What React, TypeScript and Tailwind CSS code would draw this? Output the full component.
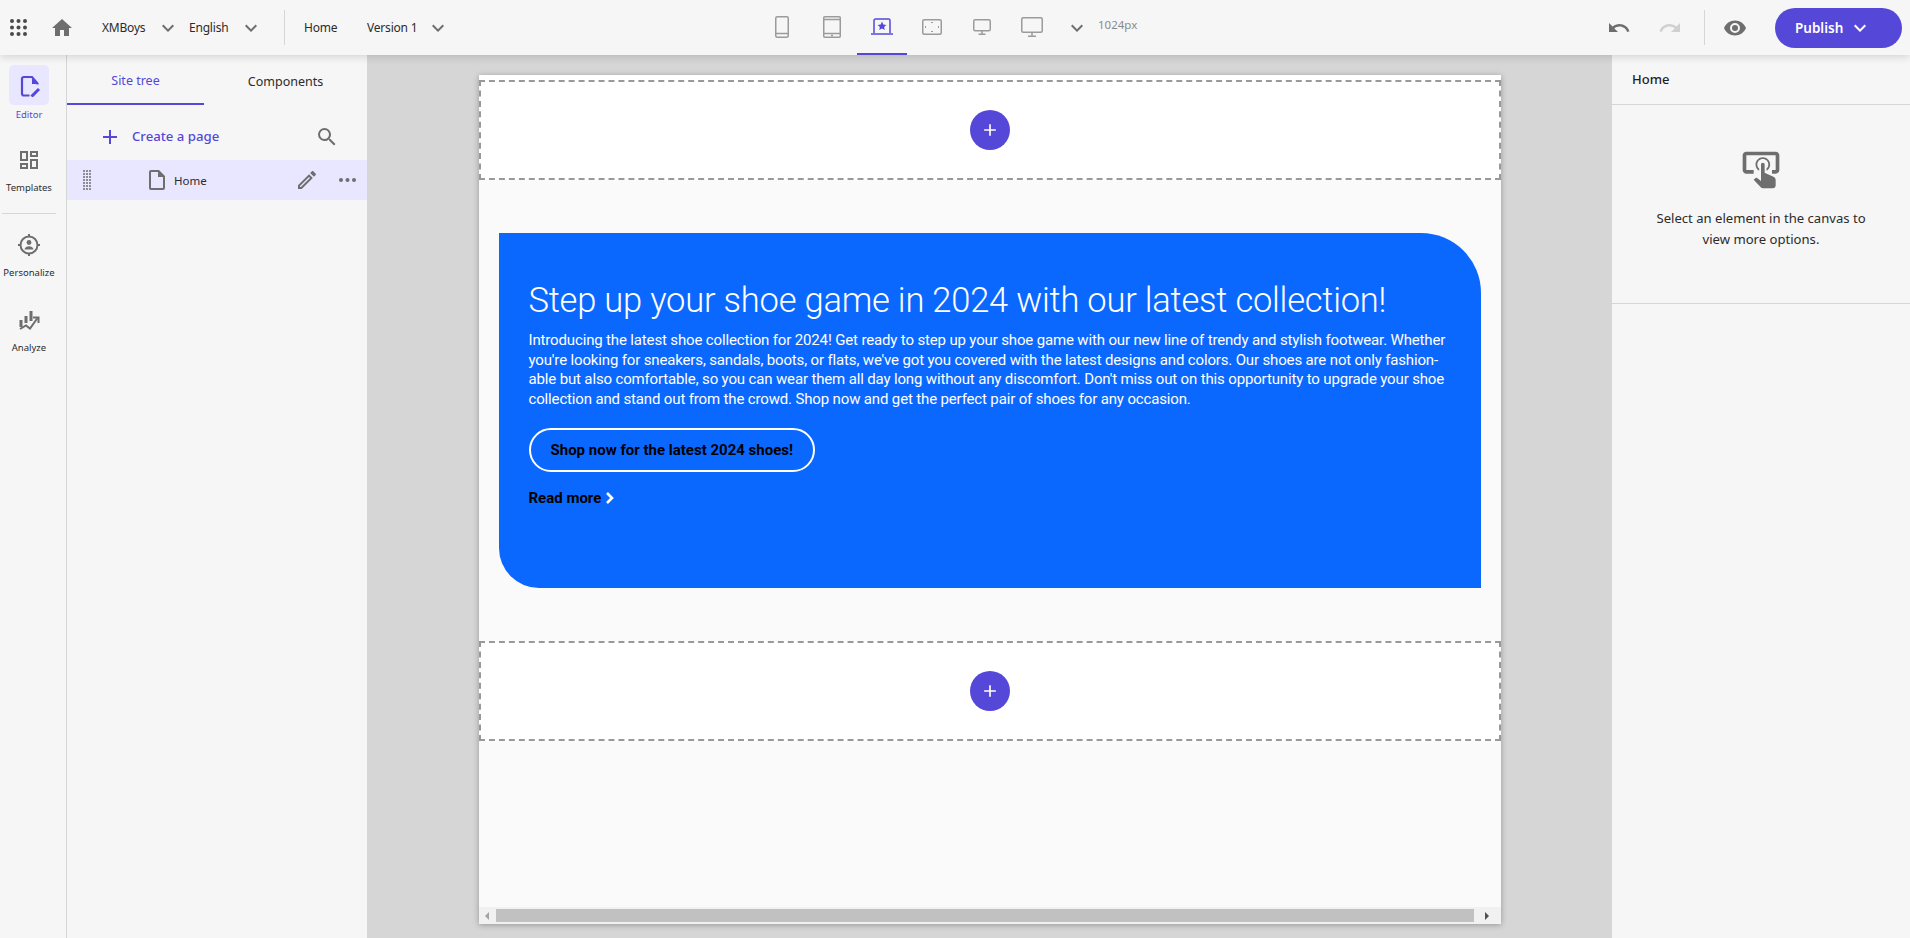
import type { ReactNode } from "react";

const uiFont = "font-['Noto_Sans',sans-serif]";

function Mdi({ d, size = 24, className = "" }: { d: string; size?: number; className?: string }) {
  return (
    <svg width={size} height={size} viewBox="0 0 24 24" className={`shrink-0 fill-current ${className}`}>
      <path d={d} />
    </svg>
  );
}

const paths = {
  home: "M10,20V14H14V20H19V12H22L12,3L2,12H5V20H10Z",
  chevron: "M7.41,8.58L12,13.17L16.59,8.58L18,10L12,16L6,10L7.41,8.58Z",
  file: "M14,2H6A2,2 0 0,0 4,4V20A2,2 0 0,0 6,22H18A2,2 0 0,0 20,20V8L14,2M18,20H6V4H13V9H18V20Z",
  pencil:
    "M14.06,9L15,9.94L5.92,19H5V18.08L14.06,9M17.66,3C17.41,3 17.15,3.1 16.96,3.29L15.13,5.12L18.88,8.87L20.71,7.04C21.1,6.65 21.1,6 20.71,5.63L18.37,3.29C18.17,3.09 17.92,3 17.66,3M14.06,6.19L3,17.25V21H6.75L17.81,9.94L14.06,6.19Z",
  search:
    "M9.5,3A6.5,6.5 0 0,1 16,9.5C16,11.11 15.41,12.59 14.44,13.73L14.71,14H15.5L20.5,19L19,20.5L14,15.5V14.71L13.73,14.44C12.59,15.41 11.11,16 9.5,16A6.5,6.5 0 0,1 3,9.5A6.5,6.5 0 0,1 9.5,3M9.5,5C7,5 5,7 5,9.5C5,12 7,14 9.5,14C12,14 14,12 14,9.5C14,7 12,5 9.5,5Z",
  plus: "M19,13H13V19H11V13H5V11H11V5H13V11H19V13Z",
  undo: "M12.5,8C9.85,8 7.45,9 5.6,10.6L2,7V16H11L7.38,12.38C8.77,11.22 10.54,10.5 12.5,10.5C16.04,10.5 19.05,12.81 20.1,16L22.47,15.22C21.08,11.03 17.15,8 12.5,8Z",
  redo: "M18.4,10.6C16.55,9 14.15,8 11.5,8C6.85,8 2.92,11.03 1.54,15.22L3.9,16C4.95,12.81 7.95,10.5 11.5,10.5C13.45,10.5 15.23,11.22 16.62,12.38L13,16H22V7L18.4,10.6Z",
  eye: "M12,9A3,3 0 0,0 9,12A3,3 0 0,0 12,15A3,3 0 0,0 15,12A3,3 0 0,0 12,9M12,17A5,5 0 0,1 7,12A5,5 0 0,1 12,7A5,5 0 0,1 17,12A5,5 0 0,1 12,17M12,4.5C7,4.5 2.73,7.61 1,12C2.73,16.39 7,19.5 12,19.5C17,19.5 21.27,16.39 23,12C21.27,7.61 17,4.5 12,4.5Z",
  templates: "M19,5V7H15V5H19M9,5V11H5V5H9M19,13V19H15V13H19M9,17V19H5V17H9M21,3H13V9H21V3M11,3H3V13H11V3M21,11H13V21H21V11M11,15H3V21H11V15Z",
  tap: "M13 5C15.21 5 17 6.79 17 9C17 10.5 16.2 11.77 15 12.46V11.24C15.61 10.69 16 9.89 16 9C16 7.34 14.66 6 13 6S10 7.34 10 9C10 9.89 10.39 10.69 11 11.24V12.46C9.8 11.77 9 10.5 9 9C9 6.79 10.79 5 13 5M20 20.5C19.97 21.32 19.32 21.97 18.5 22H13C12.62 22 12.26 21.85 12 21.57L8 17.37L8.74 16.6C8.93 16.39 9.2 16.28 9.5 16.28H9.7L12 18V9C12 8.45 12.45 8 13 8S14 8.45 14 9V13.47L18.74 15.65C19.5 15.96 20 16.7 20 17.5V20.5M20 2H4C2.9 2 2 2.9 2 4V12C2 13.11 2.9 14 4 14H8V12L4 12L4 4H20L20 12H18V14H20V13.96L20.04 14C21.13 14 22 13.09 22 12V4C22 2.9 21.11 2 20 2Z",
};

function Dots({ cols, rows, gap, r, className = "" }: { cols: number; rows: number; gap: number; r: number; className?: string }) {
  const w = (cols - 1) * gap + r * 2;
  const h = (rows - 1) * gap + r * 2;
  const items = [];
  for (let y = 0; y < rows; y++) {
    for (let x = 0; x < cols; x++) {
      items.push(<circle key={`${x}-${y}`} cx={r + x * gap} cy={r + y * gap} r={r} />);
    }
  }
  return (
    <svg width={w} height={h} viewBox={`0 0 ${w} ${h}`} className={`shrink-0 fill-current ${className}`}>
      {items}
    </svg>
  );
}

function DeviceIcon({ children, active }: { children: ReactNode; active?: boolean }) {
  return (
    <div
      className={`w-[50px] h-[55px] flex items-center justify-center border-b-2 ${
        active ? "border-[#5548d9] text-[#5548d9]" : "border-transparent text-[#9b9b9b]"
      }`}
    >
      {children}
    </div>
  );
}

function DeviceBar() {
  return (
    <div className="flex items-center h-full">
      <DeviceIcon>
        <svg width="14" height="22" viewBox="0 0 14 22" fill="none" stroke="currentColor" strokeWidth="1.5">
          <rect x="0.75" y="0.75" width="12.5" height="20.5" rx="1.5" />
          <path d="M1 17.5H13" />
        </svg>
      </DeviceIcon>
      <DeviceIcon>
        <svg width="18" height="22" viewBox="0 0 18 22" fill="none" stroke="currentColor" strokeWidth="1.5">
          <rect x="0.75" y="0.75" width="16.5" height="20.5" rx="1" />
          <path d="M1 3.5H17M1 17.5H17M8 19.5H10" />
        </svg>
      </DeviceIcon>
      <DeviceIcon active>
        <svg width="22" height="18" viewBox="0 0 22 18" fill="none" stroke="currentColor" strokeWidth="1.5">
          <path d="M3 15V2.5C3 1.6 3.6 1 4.5 1H17.5C18.4 1 19 1.6 19 2.5V15" />
          <path d="M0 16H22" />
          <path d="M11 3.6L12.3 6.6L15.4 6.9L13.1 9L13.8 12.1L11 10.5L8.2 12.1L8.9 9L6.6 6.9L9.7 6.6Z" fill="currentColor" stroke="none" />
        </svg>
      </DeviceIcon>
      <DeviceIcon>
        <svg width="20" height="16" viewBox="0 0 20 16" fill="none" stroke="currentColor" strokeWidth="1.5">
          <rect x="0.75" y="0.75" width="18.5" height="14.5" rx="1.5" />
          <path d="M9 3.5H11M9 12.5H11M3.5 7V9M16.5 7V9" strokeWidth="1" />
        </svg>
      </DeviceIcon>
      <DeviceIcon>
        <svg width="18" height="16" viewBox="0 0 18 16" fill="none" stroke="currentColor" strokeWidth="1.5">
          <rect x="0.75" y="0.75" width="16.5" height="11" rx="1.5" />
          <path d="M9 12V15M5.5 15.2H12.5" />
        </svg>
      </DeviceIcon>
      <DeviceIcon>
        <svg width="22" height="20" viewBox="0 0 22 20" fill="none" stroke="currentColor" strokeWidth="1.5">
          <rect x="0.75" y="0.75" width="20.5" height="14.5" rx="1.5" />
          <path d="M11 15V19M7 19.2H15" />
        </svg>
      </DeviceIcon>
      <Mdi d={paths.chevron} size={24} className="text-[#6e6e6e] ml-[8px]" />
      <span className="ml-[9px] mb-[5px] text-[11.5px] text-[#8a8a8a]">1024px</span>
    </div>
  );
}

function Header() {
  return (
    <header className="relative z-10 h-[55px] shrink-0 bg-[#f6f6f6] shadow-[0_2px_8px_rgba(0,0,0,0.14)] flex items-center text-[12px] tracking-[-0.2px] text-[#2b2b2b] whitespace-nowrap">
      <div className="w-[700px] flex items-center shrink-0">
        <Dots cols={3} rows={3} gap={6.5} r={2} className="ml-[10px] text-[#4a4a4a]" />
        <Mdi d={paths.home} size={24} className="ml-[23px] text-[#6e6e6e]" />
        <span className="ml-[28px] w-[44px]">XMBoys</span>
        <Mdi d={paths.chevron} size={24} className="ml-[10px] text-[#6e6e6e]" />
        <span className="ml-[9px] w-[40px]">English</span>
        <Mdi d={paths.chevron} size={24} className="ml-[10px] text-[#6e6e6e]" />
        <div className="ml-[21px] h-[35px] w-px bg-[#d6d6d6]" />
        <span className="ml-[19px] w-[33px]">Home</span>
        <span className="ml-[30px] w-[49px]">Version 1</span>
        <Mdi d={paths.chevron} size={24} className="ml-[10px] text-[#6e6e6e]" />
      </div>
      <div className="ml-[57px] h-full tracking-normal">
        <DeviceBar />
      </div>
      <div className="ml-auto flex items-center pr-[8px] tracking-normal">
        <Mdi d={paths.undo} size={24} className="text-[#6e6e6e]" />
        <Mdi d={paths.redo} size={24} className="ml-[27px] text-[#d0d0d0]" />
        <div className="ml-[22px] h-[35px] w-px bg-[#d6d6d6]" />
        <Mdi d={paths.eye} size={24} className="ml-[18px] text-[#6e6e6e]" />
        <button
          type="button"
          className="ml-[28px] w-[127px] h-[40px] rounded-full bg-[#5548d9] text-white text-[13.5px] font-semibold flex items-center pl-[20px] gap-[5px]"
        >
          <span className="mt-[1px]">Publish</span>
          <Mdi d={paths.chevron} size={24} />
        </button>
      </div>
    </header>
  );
}

function RailItem({ label, icon, active, className = "" }: { label: string; icon: ReactNode; active?: boolean; className?: string }) {
  return (
    <div className={`flex flex-col items-center ${className}`}>
      <div className={`w-[40px] h-[40px] rounded-[5px] flex items-center justify-center ${active ? "bg-[#e9e6ff] text-[#5548d9]" : "text-[#6e6e6e]"}`}>
        {icon}
      </div>
      <span className={`text-[9.5px] leading-[14px] whitespace-nowrap ${active ? "mt-[3px] text-[#5548d9]" : "mt-[1px] text-[#2b2b2b]"}`}>{label}</span>
    </div>
  );
}

function Rail() {
  return (
    <aside className="w-[67px] shrink-0 border-r border-[#d6d6d6] pr-[8px] pt-[10px] flex flex-col">
      <RailItem
        active
        label="Editor"
        icon={
          <svg width="24" height="24" viewBox="0 0 24 24" fill="none" stroke="currentColor" strokeWidth="2.2">
            <path d="M12.5 22.5H7C5.9 22.5 5 21.6 5 20.5V6C5 4.9 5.9 4 7 4H15L20.5 10.5V11.5" />
            <path d="M15 5L15 11H20.5Z" fill="currentColor" stroke="none" />
            <path d="M14.5 23.5L22 16" strokeWidth="3" />
          </svg>
        }
      />
      <RailItem className="mt-[18px]" label="Templates" icon={<Mdi d={paths.templates} size={24} />} />
      <div className="mt-[18px] ml-[2px] w-[54px] h-px bg-[#d6d6d6]" />
      <RailItem
        className="mt-[11px]"
        label="Personalize"
        icon={
          <svg width="24" height="24" viewBox="0 0 24 24" fill="none" stroke="currentColor" strokeWidth="2">
            <circle cx="12" cy="12" r="8.5" />
            <path d="M12 1V4M12 20V23M1 12H4M20 12H23" />
            <circle cx="12" cy="9.5" r="2.4" fill="currentColor" stroke="none" />
            <path d="M7.5 16.5C8 14 10 13.3 12 13.3S16 14 16.5 16.5Z" fill="currentColor" stroke="none" />
          </svg>
        }
      />
      <RailItem
        className="mt-[20px]"
        label="Analyze"
        icon={
          <svg width="24" height="24" viewBox="0 0 24 24" fill="none" stroke="currentColor">
            <path d="M4 12V19M9 8V15M14 3V13" strokeWidth="3" />
            <path d="M3 21L9 17.5L13 20.5L20.5 10" strokeWidth="2" />
            <path d="M16 9.5H21.5V15" strokeWidth="2" />
          </svg>
        }
      />
    </aside>
  );
}

function SiteTree() {
  return (
    <aside className="w-[300px] shrink-0 flex flex-col">
      <div className="flex h-[50px] text-[12.5px]">
        <div className="w-[137px] border-b-2 border-[#5548d9] text-[#5548d9] flex items-center justify-center pt-[5px]">Site tree</div>
        <div className="flex-1 text-[#2b2b2b] flex items-center justify-center pt-[5px]">Components</div>
      </div>
      <div className="h-[55px] flex items-center pl-[31px] pt-[8px] text-[#5548d9]">
        <Mdi d={paths.plus} size={24} />
        <span className="ml-[10px] text-[13.2px] font-medium">Create a page</span>
        <Mdi d={paths.search} size={24} className="ml-auto mr-[28px] text-[#6e6e6e]" />
      </div>
      <div className="h-[40px] bg-[#e9e6ff] flex items-center text-[#6e6e6e]">
        <Dots cols={3} rows={7} gap={3} r={1} className="ml-[16px] text-[#6e6e6e]" />
        <Mdi d={paths.file} size={24} className="ml-[54px]" />
        <span className="ml-[5px] mt-[1px] text-[11.5px] text-[#2b2b2b]">Home</span>
        <Mdi d={paths.pencil} size={24} className="ml-auto" />
        <Dots cols={3} rows={1} gap={6.5} r={2} className="ml-[20px] mr-[11px]" />
      </div>
    </aside>
  );
}

function AddButton() {
  return (
    <div className="w-[40px] h-[40px] rounded-full bg-[#5548d9] text-white flex items-center justify-center">
      <Mdi d={paths.plus} size={20} />
    </div>
  );
}

function DropZone() {
  return (
    <div className="h-[100px] border-2 border-dashed border-[#999999] bg-white flex items-center justify-center">
      <AddButton />
    </div>
  );
}

const heroLines = [
  "Introducing the latest shoe collection for 2024! Get ready to step up your shoe game with our new line of trendy and stylish footwear. Whether",
  "you're looking for sneakers, sandals, boots, or flats, we've got you covered with the latest designs and colors. Our shoes are not only fashion-",
  "able but also comfortable, so you can wear them all day long without any discomfort. Don't miss out on this opportunity to upgrade your shoe",
  "collection and stand out from the crowd. Shop now and get the perfect pair of shoes for any occasion.",
];

function Hero() {
  return (
    <section className="mx-[20px] mt-[53px] h-[355px] bg-[#0b68ff] rounded-tr-[60px] rounded-bl-[40px] px-[30px] pt-[45px] font-['Roboto',sans-serif] text-white">
      <h1 className="text-[34.5px] leading-[44px] font-light whitespace-nowrap tracking-[-0.22px]">Step up your shoe game in 2024 with our latest collection!</h1>
      <div className="mt-[9px] text-[15px] leading-[19.7px] tracking-[-0.15px]">
        {heroLines.map((line) => (
          <div key={line} className="whitespace-nowrap">{line}</div>
        ))}
      </div>
      <div className="mt-[18px] w-[286px] h-[44px] border-2 border-white rounded-full flex items-center pl-[20px] text-black text-[15px] font-bold whitespace-nowrap">
        Shop now for the latest 2024 shoes!
      </div>
      <div className="mt-[15px] flex items-center text-black text-[15px] font-bold">
        Read more
        <svg width="10" height="12" viewBox="0 0 10 12" fill="none" stroke="white" strokeWidth="2.6" className="ml-[4px]">
          <path d="M2 1L7 6L2 11" />
        </svg>
      </div>
    </section>
  );
}

function Scrollbar() {
  return (
    <div className="mt-auto h-[17px] shrink-0 bg-[#f1f1f1] flex items-center">
      <div className="w-[17px] flex justify-center">
        <div className="border-y-[4px] border-r-[4px] border-y-transparent border-r-[#a3a3a3]" />
      </div>
      <div className="w-[978px] h-[13px] bg-[#c1c1c1]" />
      <div className="flex-1 flex justify-center">
        <div className="border-y-[4px] border-l-[4px] border-y-transparent border-l-[#505050]" />
      </div>
    </div>
  );
}

function Canvas() {
  return (
    <main className="flex-1 bg-[#d6d6d6] flex justify-center pt-[20px]">
      <div className="w-[1022px] h-[849px] bg-[#fafafa] shadow-[0_1px_6px_rgba(0,0,0,0.3)] flex flex-col">
        <div className="bg-white pt-[5px]">
          <DropZone />
        </div>
        <Hero />
        <div className="mt-[53px]">
          <DropZone />
        </div>
        <Scrollbar />
      </div>
    </main>
  );
}

function Inspector() {
  return (
    <aside className="w-[298px] shrink-0 flex flex-col">
      <div className="h-[50px] border-b border-[#d6d6d6] flex items-center pl-[20px] text-[13px] font-medium text-[#1f1f1f]">Home</div>
      <div className="h-[199px] border-b border-[#d6d6d6] flex flex-col items-center pt-[43px]">
        <Mdi d={paths.tap} size={44} className="text-[#6e6e6e]" />
        <p className="mt-[16px] text-center text-[13.1px] leading-[21px] text-[#2b2b2b]">
          Select an element in the canvas to
          <br />
          view more options.
        </p>
      </div>
    </aside>
  );
}

export default function App() {
  return (
    <div className={`w-[1910px] h-[938px] overflow-hidden flex flex-col bg-[#f6f6f6] ${uiFont}`}>
      <Header />
      <div className="flex-1 flex min-h-0">
        <Rail />
        <SiteTree />
        <Canvas />
        <Inspector />
      </div>
    </div>
  );
}
